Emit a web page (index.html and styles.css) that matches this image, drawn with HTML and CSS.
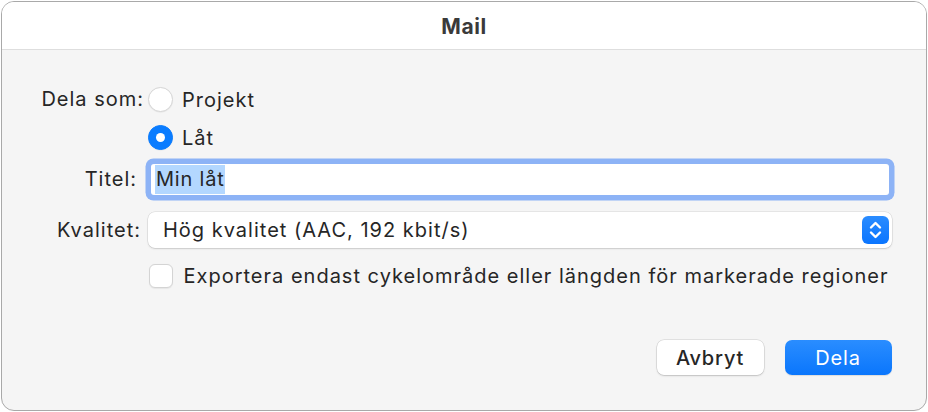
FILE: index.html
```html
<!DOCTYPE html>
<html lang="sv">
<head>
<meta charset="utf-8">
<title>Mail</title>
<link rel="stylesheet" href="styles.css">
</head>
<body>
<div class="window">
  <div class="titlebar">Mail</div>
  <div class="content">
    <div class="form">
      <div class="label label-share">Dela som:</div>
      <label class="radio-item"><span class="radio"></span><span>Projekt</span></label>
      <div class="label"></div>
      <label class="radio-item second"><span class="radio on"></span><span>Låt</span></label>
      <div class="label label-title">Titel:</div>
      <div class="field"><span class="sel">Min låt</span></div>
      <div class="label label-quality">Kvalitet:</div>
      <div class="popup">
        <span class="popup-text">Hög kvalitet (AAC, 192 kbit/s)</span>
        <span class="stepper">
          <svg width="27" height="28" viewBox="0 0 27 28"><path d="M9 11.5 L13.5 7 L18 11.5 M9 16.5 L13.5 21 L18 16.5" fill="none" stroke="#fff" stroke-width="2.4" stroke-linecap="round" stroke-linejoin="round"/></svg>
        </span>
      </div>
      <div class="label"></div>
      <label class="check-item"><span class="checkbox"></span><span>Exportera endast cykelområde eller längden för markerade regioner</span></label>
    </div>
    <div class="buttons">
      <button class="btn">Avbryt</button>
      <button class="btn primary">Dela</button>
    </div>
  </div>
</div>
</body>
</html>
```
FILE: styles.css
```css
* { box-sizing: border-box; }
html, body { margin: 0; padding: 0; background: #ffffff; }
body {
  font-family: Inter, "Liberation Sans", sans-serif;
  font-size: 20px;
  letter-spacing: 1px;
  color: #262626;
}
.window {
  margin: 1px 0 0 1px;
  width: 926px;
  height: 410px;
  border: 1.5px solid #a9a9a9;
  border-radius: 13px;
  overflow: hidden;
  background: #f5f5f5;
  display: flex;
  flex-direction: column;
}
.titlebar {
  height: 48px;
  flex: none;
  background: #ffffff;
  border-bottom: 1px solid #dedede;
  display: flex;
  align-items: center;
  justify-content: center;
  font-weight: 700;
  font-size: 21px;
  letter-spacing: 0.6px;
  color: #3a3a3a;
  padding-top: 2px;
}
.content {
  display: flex;
  flex-direction: column;
  padding-top: 37px;
  padding-right: 34.5px;
}
.form {
  display: grid;
  grid-template-columns: 146px 1fr;
  align-items: center;
}
.label {
  text-align: right;
  padding-right: 4px;
  line-height: 25px;
}
.label-title { padding-right: 11px; margin-top: 14px; }
.label-quality { padding-right: 7px; margin-top: 17px; }
.radio-item { display: flex; align-items: center; gap: 9px; height: 25px; }
.radio-item.second { margin-top: 13px; }
.radio {
  width: 25px; height: 25px; border-radius: 50%;
  background: #ffffff;
  border: 1px solid #d6d6d6;
  box-shadow: 0 0.5px 1px rgba(0,0,0,0.08);
  flex: none;
  display: flex; align-items: center; justify-content: center;
}
.radio.on {
  background: #0a7cff;
  border-color: #0a7cff;
}
.radio.on::after {
  content: "";
  width: 9px; height: 9px; border-radius: 50%;
  background: #ffffff;
}
.field {
  margin: 14px 3px 0 3px;
  height: 31px;
  background: #ffffff;
  border-radius: 3px;
  box-shadow: 0 0 0 5.5px #8db3f6;
  display: flex; align-items: center;
  padding-left: 4px;
}
.sel {
  background: #b3d7ff;
  height: 29px;
  line-height: 29px;
  padding: 0 0 0 1px;
  letter-spacing: 0.8px;
}
.popup {
  margin-top: 17px;
  height: 36px;
  background: #ffffff;
  border-radius: 7px;
  box-shadow: 0 0 0 0.5px rgba(0,0,0,0.12), 0 1px 2px rgba(0,0,0,0.12);
  display: flex; align-items: center; justify-content: space-between;
  padding-left: 15px; padding-right: 3px;
}
.stepper {
  width: 27px; height: 28px;
  border-radius: 6px;
  background: linear-gradient(#2a8cff, #0a75ff);
  display: flex;
}
.check-item { display: flex; align-items: center; gap: 11px; margin-left: 0.5px; margin-top: 16px; }
.checkbox {
  width: 24px; height: 24px; border-radius: 6px;
  background: #ffffff;
  border: 1px solid #d4d4d4;
  box-shadow: 0 0.5px 1px rgba(0,0,0,0.06);
  flex: none;
}
.buttons {
  display: flex;
  justify-content: flex-end;
  gap: 21px;
  margin-top: 52px;
}
.btn {
  width: 107px; height: 35px;
  border: none;
  border-radius: 7px;
  background: #ffffff;
  box-shadow: 0 0 0 0.5px rgba(0,0,0,0.15), 0 1px 2px rgba(0,0,0,0.15);
  font-family: Inter, "Liberation Sans", sans-serif;
  font-size: 20px;
  letter-spacing: 0.8px;
  font-weight: 500;
  color: #262626;
  padding: 0;
}
.btn.primary {
  background: linear-gradient(#2a8dff, #0a76fc);
  color: #ffffff;
  font-weight: 400;
  box-shadow: 0 1px 1px rgba(0,0,0,0.1);
}
```
